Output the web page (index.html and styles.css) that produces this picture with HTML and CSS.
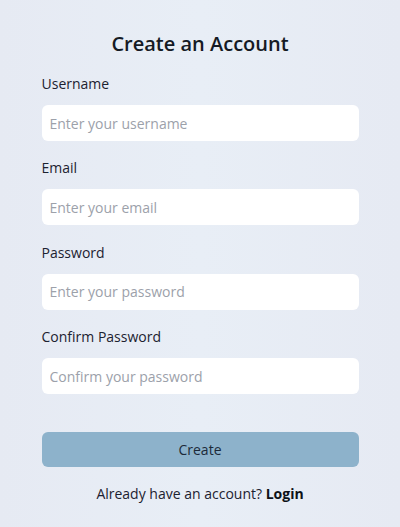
FILE: index.html
```html
<!DOCTYPE html>
<html lang="en">
<head>
<meta charset="utf-8">
<title>Create an Account</title>
<link rel="stylesheet" href="styles.css">
</head>
<body>
<main class="page">
  <form class="signup">
    <h1 class="title">Create an Account</h1>
    <div class="field">
      <label class="label" for="username">Username</label>
      <input class="input" id="username" type="text" placeholder="Enter your username">
    </div>
    <div class="field">
      <label class="label" for="email">Email</label>
      <input class="input" id="email" type="email" placeholder="Enter your email">
    </div>
    <div class="field">
      <label class="label" for="password">Password</label>
      <input class="input" id="password" type="password" placeholder="Enter your password">
    </div>
    <div class="field">
      <label class="label" for="confirm">Confirm Password</label>
      <input class="input" id="confirm" type="password" placeholder="Confirm your password">
    </div>
    <button class="submit" type="button">Create</button>
    <p class="switch">Already have an account? <a class="switch-link" href="#">Login</a></p>
  </form>
</main>
</body>
</html>
```

FILE: styles.css
```css
html, body {
  margin: 0;
  padding: 0;
}
body {
  background: #e7ecf5;
  font-family: "Open Sans", "Noto Sans", sans-serif;
  color: #1c2230;
}
.page {
  min-height: 527px;
  display: flex;
  justify-content: center;
  background: linear-gradient(90deg, #e6eaf3 0%, #e8eef6 50%, #e6eaf3 100%);
}
.signup {
  width: 317px;
  padding-top: 30px;
  display: flex;
  flex-direction: column;
}
.title {
  margin: 0 0 15px;
  font-size: 20px;
  line-height: 28px;
  font-weight: 600;
  text-align: center;
  color: #151a24;
}
.field {
  display: flex;
  flex-direction: column;
  gap: 12px;
  margin-bottom: 16.4px;
}
.label {
  font-size: 14px;
  line-height: 20px;
  padding-top: 1px;
  margin-bottom: -1px;
  color: #1c2230;
}
.input {
  box-sizing: border-box;
  height: 36px;
  width: 100%;
  border: none;
  border-radius: 6px;
  background: #ffffff;
  padding: 0 8px;
  font-family: inherit;
  font-size: 14px;
  color: #1c2230;
  outline: none;
}
.input::placeholder {
  color: #9ca1aa;
}
.submit {
  margin-top: 21px;
  height: 35px;
  border: none;
  border-radius: 6px;
  background: #8db2cb;
  font-family: inherit;
  font-size: 14px;
  color: #1c2a3a;
}
.switch {
  margin: 17px 0 0;
  font-size: 14px;
  line-height: 20px;
  text-align: center;
  color: #1c2230;
}
.switch-link {
  color: #0d1117;
  font-weight: 700;
  text-decoration: none;
}
```
